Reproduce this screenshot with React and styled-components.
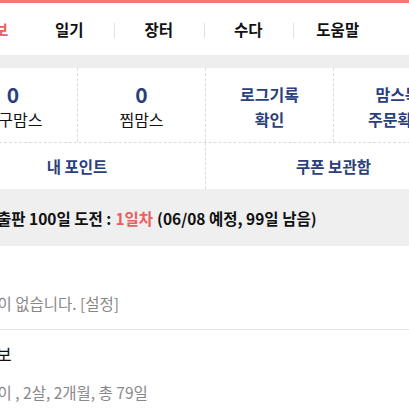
import React from 'react';
import styled, { createGlobalStyle } from 'styled-components';

const GlobalStyle = createGlobalStyle`
  html, body {
    margin: 0;
    padding: 0;
    background: #fff;
    overflow: hidden;
  }
  body {
    font-family: "Noto Sans CJK KR", "Noto Sans", sans-serif;
    color: #111;
  }
`;

const NAVY = '#2b3f7d';
const RED = '#e8615e';

// the page is wider than the window and scrolled a little to the right
const Page = styled.div`
  width: 512px;
  margin-left: -51px;
  border-top: 3px solid #ef7a73;
`;

const Nav = styled.nav`
  height: 52px;
  overflow: hidden;
  background: #fff;
`;

const NavStrip = styled.ul`
  display: flex;
  list-style: none;
  margin: 0 0 0 -14px;
  padding: 0;
  height: 100%;
`;

const NavItem = styled.li`
  position: relative;
  flex: 0 0 89.5px;
  display: flex;
  align-items: center;
  justify-content: center;
  font-size: 15.5px;
  font-weight: 700;
  color: ${p => (p.$active ? RED : '#111')};

  & + &::before {
    content: '';
    position: absolute;
    left: 0;
    top: 20px;
    width: 1px;
    height: 15px;
    background: #e2e2e2;
  }
`;

const Band = styled.div`
  height: 13px;
  background: #eeeeee;
`;

const StatGrid = styled.div`
  display: grid;
  grid-template-columns: repeat(4, 1fr);
  border-bottom: 1px dashed #dcdcdc;
`;

const StatCell = styled.div`
  height: 74px;
  display: flex;
  flex-direction: column;
  align-items: center;
  justify-content: center;
  padding-top: 4px;
  box-sizing: border-box;
  & + & {
    border-left: 1px dashed #dcdcdc;
  }
`;

const Count = styled.div`
  font-size: 21px;
  font-weight: 700;
  color: ${NAVY};
  line-height: 25px;
`;

const Label = styled.div`
  font-size: 16px;
  line-height: 25px;
  color: ${p => (p.$link ? NAVY : '#111')};
  font-weight: ${p => (p.$link ? 700 : 400)};
`;

const LinkRow = styled.div`
  display: grid;
  grid-template-columns: 1fr 1fr;
`;

const LinkCell = styled.div`
  height: 46px;
  display: flex;
  align-items: center;
  justify-content: center;
  font-size: 15.5px;
  font-weight: 700;
  color: ${NAVY};
  & + & {
    border-left: 1px dashed #dcdcdc;
  }
`;

const Challenge = styled.div`
  height: 57px;
  display: flex;
  align-items: center;
  padding-left: 16px;
  background: #efefef;
  font-size: 15.5px;
  font-weight: 700;
  white-space: nowrap;
`;

const Day = styled.span`
  color: ${RED};
  margin: 0 4px;
`;

const Section = styled.section`
  padding: ${p => p.$pad};
  border-bottom: ${p => (p.$line ? '1px solid #e6e6e6' : 'none')};
`;

const Empty = styled.div`
  font-size: 15.5px;
  line-height: 22px;
  color: #888;
  padding-left: 20px;
`;

const BabyName = styled.div`
  font-size: 17px;
  line-height: 24px;
  color: #111;
`;

const BabyInfo = styled.div`
  margin-top: 15px;
  font-size: 15.5px;
  line-height: 22px;
  color: #888;
  padding-left: 20px;
`;

const navItems = ['육아정보', '일기', '장터', '수다', '도움말'];

export default function App() {
  return (
    <>
      <GlobalStyle />
      <Page>
        <Nav>
          <NavStrip>
            {navItems.map((item, i) => (
              <NavItem key={item} $active={i === 0}>{item}</NavItem>
            ))}
          </NavStrip>
        </Nav>
        <Band />
        <StatGrid>
          <StatCell>
            <Count>0</Count>
            <Label>친구맘스</Label>
          </StatCell>
          <StatCell>
            <Count>0</Count>
            <Label>찜맘스</Label>
          </StatCell>
          <StatCell>
            <Label $link>로그기록</Label>
            <Label $link>확인</Label>
          </StatCell>
          <StatCell>
            <Label $link>맘스북</Label>
            <Label $link>주문확인</Label>
          </StatCell>
        </StatGrid>
        <LinkRow>
          <LinkCell>내 포인트</LinkCell>
          <LinkCell>쿠폰 보관함</LinkCell>
        </LinkRow>
        <Challenge>
          아기 출판 100일 도전 :<Day>1일차</Day>(06/08 예정, 99일 남음)
        </Challenge>
        <Section $pad="46px 0 15px" $line>
          <Empty>일정이 없습니다. [설정]</Empty>
        </Section>
        <Section $pad="12px 0 10px">
          <BabyName>아기정보</BabyName>
          <BabyInfo>서윤이 , 2살, 2개월, 총 79일</BabyInfo>
        </Section>
      </Page>
    </>
  );
}
